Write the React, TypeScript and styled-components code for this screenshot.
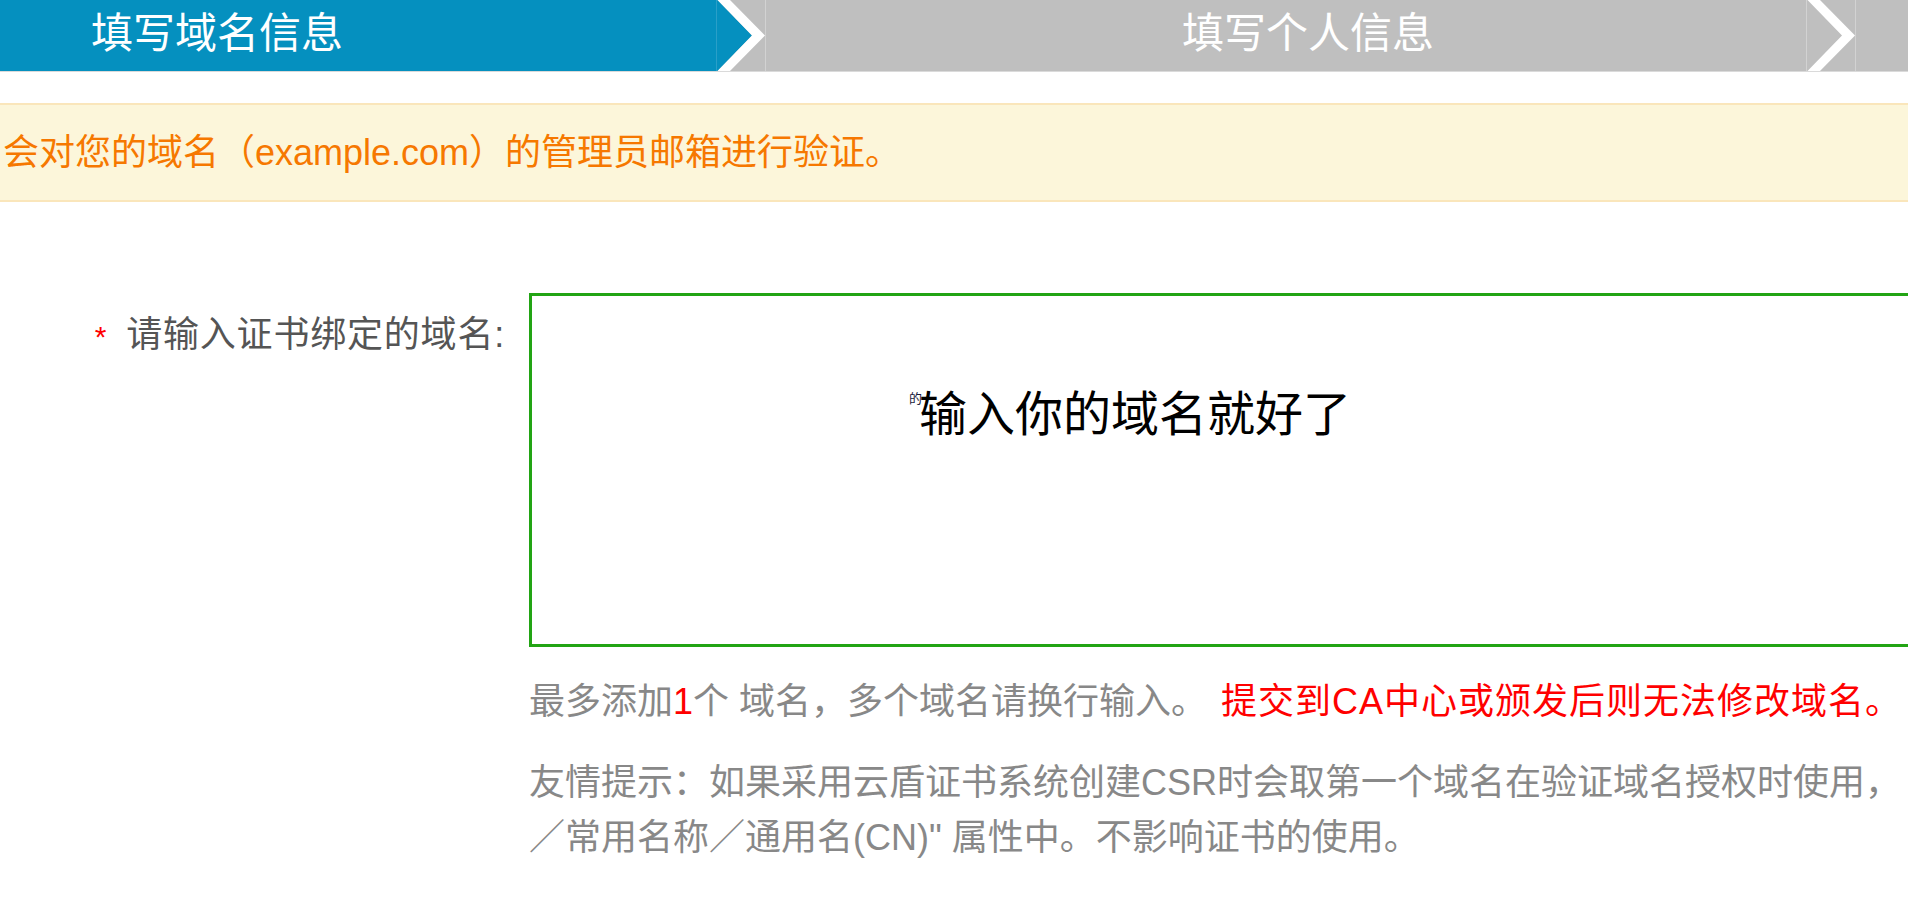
import React from 'react';
import styled, { createGlobalStyle } from 'styled-components';

const GlobalStyle = createGlobalStyle`
  html, body {
    margin: 0;
    padding: 0;
    background: #ffffff;
  }
  body {
    width: 1908px;
    height: 898px;
    overflow: hidden;
    font-family: "Liberation Sans", "Noto Sans CJK SC", sans-serif;
  }
`;

const FONT = `"Liberation Sans", "Noto Sans CJK SC", sans-serif`;

const Page = styled.div`
  width: 1908px;
  height: 898px;
  overflow: hidden;
  font-family: ${FONT};
`;

const StepBar = styled.div`
  display: flex;
  height: 71px;
  border-bottom: 1px solid #dadada;
`;

const Step = styled.div<{ $active?: boolean; $width?: number; $indent: number }>`
  flex: ${(p) => (p.$width ? `0 0 ${p.$width}px` : '1 1 auto')};
  box-sizing: border-box;
  display: flex;
  align-items: center;
  padding-left: ${(p) => p.$indent}px;
  padding-bottom: 3px;
  background: ${(p) => (p.$active ? '#0590bf' : '#bfbfbf')};
  color: #ffffff;
  font-size: 42px;
  line-height: 42px;
  white-space: nowrap;
  overflow: hidden;
`;

const ChevronSvg = styled.svg`
  flex: 0 0 50px;
  display: block;
`;

const Chevron: React.FC<{ left: string; right: string; leftLine: string }> = ({ left, right, leftLine }) => (
  <ChevronSvg width={50} height={71} viewBox="0 0 50 71">
    <rect x={0} y={0} width={50} height={71} fill={right} />
    <polygon points="0,0 1.5,0 36,35.5 1.5,71 0,71" fill={left} />
    <polygon points="1.5,0 14,0 49,35.5 14,71 1.5,71 36,35.5" fill="#ffffff" />
    <rect x={0} y={0} width={1} height={71} fill={leftLine} />
    <rect x={49} y={0} width={1} height={71} fill="#d2d2d2" />
  </ChevronSvg>
);

const Notice = styled.div`
  margin-top: 31px;
  height: 95px;
  box-sizing: content-box;
  border-top: 2px solid #fae6bb;
  border-bottom: 2px solid #fae6bb;
  background: #fcf6da;
  display: flex;
  align-items: center;
  padding-left: 3px;
  color: #f67800;
  font-size: 36px;
  line-height: 36px;
  white-space: nowrap;
`;

const Form = styled.div`
  margin-top: 91px;
  display: grid;
  grid-template-columns: 505px 1500px;
  column-gap: 24px;
`;

const Label = styled.div`
  padding-top: 24px;
  text-align: right;
  color: #555555;
  font-size: 36px;
  line-height: 36px;
  letter-spacing: 0.8px;
  white-space: nowrap;
`;

const Required = styled.span`
  color: #ff0000;
  font-size: 30px;
  margin-right: 19px;
`;

const InputWrap = styled.div`
  position: relative;
`;

const DomainInput = styled.textarea`
  display: block;
  width: 1500px;
  height: 354px;
  box-sizing: border-box;
  margin: 0;
  border: 3px solid #22a414;
  padding: 95px 0 0 387px;
  font-family: ${FONT};
  font-size: 48px;
  line-height: 48px;
  color: #000000;
  background: #ffffff;
  resize: none;
  outline: none;
  overflow: hidden;
`;

const ImeHint = styled.span`
  position: absolute;
  left: 380px;
  top: 99px;
  font-size: 13px;
  line-height: 13px;
  color: #1a1a3a;
`;

const Hint = styled.div<{ $gap: number; $lh: number }>`
  grid-column: 2;
  margin-top: ${(p) => p.$gap}px;
  color: #888888;
  font-size: 36px;
  line-height: ${(p) => p.$lh}px;
  white-space: nowrap;
`;

const Red = styled.span`
  color: #ff0000;
`;

const RedNote = styled(Red)`
  margin-left: 14px;
  letter-spacing: 1px;
`;

export default function App() {
  return (
    <Page>
      <GlobalStyle />
      <StepBar>
        <Step $active $width={716} $indent={91}>
          填写域名信息
        </Step>
        <Chevron left="#0590bf" right="#bfbfbf" leftLine="#2a9fc8" />
        <Step $width={1040} $indent={416}>
          填写个人信息
        </Step>
        <Chevron left="#bfbfbf" right="#bfbfbf" leftLine="#d2d2d2" />
        <Step $indent={40}>{''}</Step>
      </StepBar>

      <Notice>会对您的域名（example.com）的管理员邮箱进行验证。</Notice>

      <Form>
        <Label>
          <Required>*</Required>请输入证书绑定的域名:
        </Label>
        <InputWrap>
          <DomainInput readOnly value="输入你的域名就好了" />
          <ImeHint>的</ImeHint>
        </InputWrap>

        <Hint $gap={37} $lh={36}>
          最多添加<Red>1</Red>个 域名，多个域名请换行输入。<RedNote>提交到CA中心或颁发后则无法修改域名。</RedNote>
        </Hint>
        <Hint $gap={35} $lh={55}>
          友情提示：如果采用云盾证书系统创建CSR时会取第一个域名在验证域名授权时使用，
          <br />
          ／常用名称／通用名(CN)" 属性中。不影响证书的使用。
        </Hint>
      </Form>
    </Page>
  );
}
